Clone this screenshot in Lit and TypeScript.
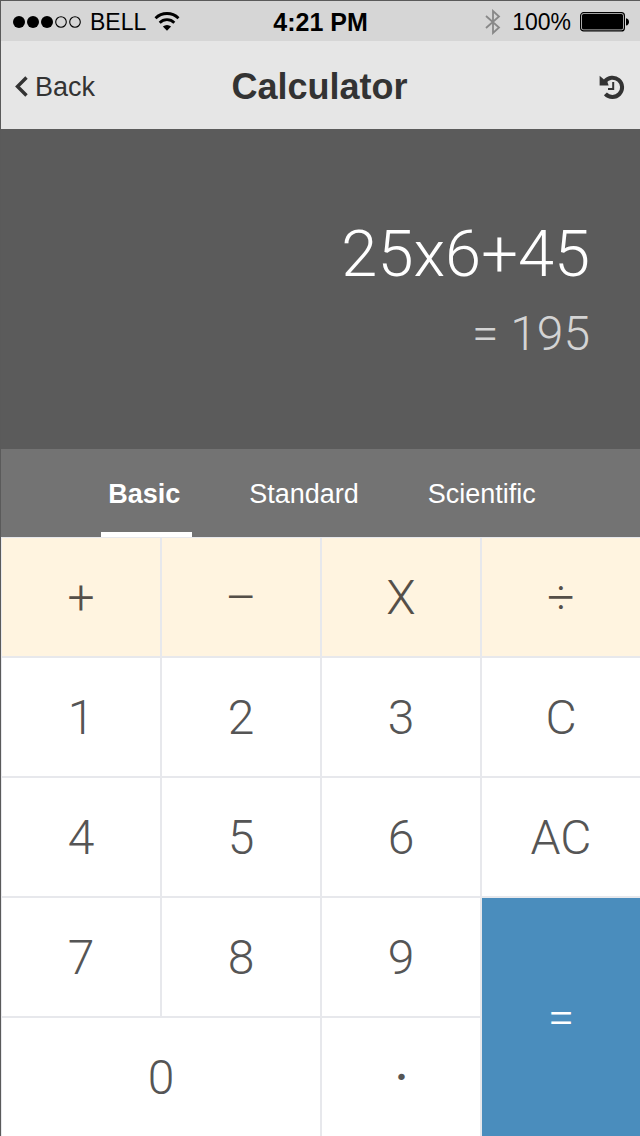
import { LitElement, html, css, svg } from "lit";
import { customElement, state } from "lit/decorators.js";
import { classMap } from "lit/directives/class-map.js";

type Key = { label: string; name: string; kind?: string };

const KEYS: Key[] = [
  { label: "+", name: "Plus", kind: "op" },
  { label: "–", name: "Minus", kind: "op" },
  { label: "X", name: "Times", kind: "op" },
  { label: "÷", name: "Divide", kind: "op" },
  { label: "1", name: "1" },
  { label: "2", name: "2" },
  { label: "3", name: "3" },
  { label: "C", name: "Clear last" },
  { label: "4", name: "4" },
  { label: "5", name: "5" },
  { label: "6", name: "6" },
  { label: "AC", name: "All clear" },
  { label: "7", name: "7" },
  { label: "8", name: "8" },
  { label: "9", name: "9" },
  { label: "=", name: "Equals", kind: "equals" },
  { label: "0", name: "0", kind: "zero" },
  { label: "·", name: "Decimal point", kind: "point" },
];

const MODES = ["Basic", "Standard", "Scientific"];

/** Evaluates + – x ÷ with the usual precedence. */
function evaluate(expr: string): string {
  const tokens = expr.match(/[\d.]+|[+–x÷]/g) ?? [];
  const terms: number[] = [];
  let op = "+";
  for (const t of tokens) {
    if (/[+–x÷]/.test(t)) {
      op = t;
      continue;
    }
    const n = Number(t);
    if (op === "+") terms.push(n);
    else if (op === "–") terms.push(-n);
    else if (op === "x") terms.push((terms.pop() ?? 0) * n);
    else terms.push((terms.pop() ?? 0) / n);
  }
  return String(terms.reduce((a, b) => a + b, 0));
}

@customElement("status-bar")
export class StatusBar extends LitElement {
  static styles = css`
    :host {
      display: grid;
      grid-template-columns: 1fr auto 1fr;
      align-items: center;
      height: 40px;
      padding: 2px 11px 0;
      box-sizing: border-box;
      background: #d6d6d6;
      color: #000;
      font: 23px/28px "Liberation Sans", Arial, sans-serif;
    }
    .side {
      display: flex;
      align-items: center;
      gap: 8px;
    }
    .right {
      justify-content: flex-end;
      gap: 9px;
    }
    .time {
      font-size: 25px;
      font-weight: 700;
    }
    svg {
      display: block;
    }
  `;
  render() {
    return html`
      <div class="side">
        <svg width="70" height="14" viewBox="0 0 70 14" aria-label="Signal 3 of 5">
          ${[0, 1, 2, 3, 4].map((i) =>
            i < 3
              ? svg`<circle cx=${7 + i * 14} cy="7" r="6"></circle>`
              : svg`<circle cx=${7 + i * 14} cy="7" r="5.3" fill="none" stroke="#000" stroke-width="1.1"></circle>`
          )}
        </svg>
        <span>BELL</span>
        <svg width="26" height="20" viewBox="0 0 26 20" aria-label="Wi-Fi">
          <path d="M13 18.800 8.900 14.600a5.900 5.900 0 0 1 8.200 0z" />
          <path
            d="M5.700 10.700a10.400 10.400 0 0 1 14.600 0M1.500 6.200a16.400 16.400 0 0 1 23 0"
            fill="none"
            stroke="#000"
            stroke-width="2.800"
          />
        </svg>
      </div>
      <span class="time">4:21 PM</span>
      <div class="side right">
        <svg width="18" height="26" viewBox="0 0 18 26" aria-label="Bluetooth">
          <path
            d="M1 7 14 18.500 8 24V2L14 7.500 1 19"
            fill="none"
            stroke="#888"
            stroke-width="1.8"
          />
        </svg>
        <span>100%</span>
        <svg width="49" height="20" viewBox="0 0 49 20" aria-label="Battery full">
          <rect x="0.600" y="0.700" width="43.800" height="18.200" rx="3" fill="none" stroke="#000" stroke-width="1.2" />
          <rect x="2" y="2" width="41" height="15.600" rx="1.500" />
          <path d="M46 6.200q3 .8 3 3.700t-3 3.700z" />
        </svg>
      </div>
    `;
  }
}

@customElement("app-root")
export class AppRoot extends LitElement {
  @state() private expression = "25x6+45";
  @state() private mode = "Basic";

  static styles = css`
    :host {
      display: flex;
      flex-direction: column;
      box-sizing: border-box;
      min-height: 100vh;
      border: solid #5a5a5a;
      border-width: 1px 0 0 1px;
      background: #fff;
      font-family: "Liberation Sans", Arial, sans-serif;
    }
    button {
      margin: 0;
      border: 0;
      background: none;
      font: inherit;
      color: inherit;
      cursor: pointer;
    }
    svg {
      display: block;
    }
    .header {
      display: grid;
      grid-template-columns: 1fr auto 1fr;
      align-items: center;
      box-sizing: border-box;
      height: 88px;
      padding: 4px 15px 0 13px;
      background: #e6e6e6;
      color: #333;
    }
    .back {
      display: flex;
      align-items: center;
      gap: 6px;
      color: inherit;
      font-size: 27px;
      line-height: 32px;
      text-decoration: none;
    }
    .title {
      margin: 0;
      font-size: 36px;
      line-height: 44px;
      font-weight: 700;
    }
    .history {
      justify-self: end;
      padding: 0;
    }
    .display {
      display: flex;
      flex-direction: column;
      justify-content: center;
      align-items: flex-end;
      box-sizing: border-box;
      height: 320px;
      padding: 2px 50px 0;
      background: #5b5b5b;
      font-family: Roboto, "Liberation Sans", sans-serif;
      font-weight: 300;
    }
    .expression {
      color: #fff;
      font-size: 65px;
      line-height: 88px;
    }
    .result {
      color: #d4d4d4;
      font-size: 48px;
      line-height: 72px;
    }
    .tabs {
      display: flex;
      justify-content: center;
      gap: 50px;
      height: 88px;
      padding-left: 8px;
      background: #737373;
      color: #fff;
    }
    .tab {
      box-sizing: border-box;
      padding: 2px 12px 0 7px;
      border: solid transparent;
      border-width: 5px 0;
      font-size: 27px;
      line-height: 32px;
    }
    .tab.active {
      border-bottom-color: #fff;
      font-weight: 700;
    }
    .keypad {
      display: grid;
      grid-template-columns: repeat(4, 1fr);
      grid-template-rows: repeat(5, minmax(64px, 1fr));
      gap: 2px;
      flex: 1;
      padding: 1px 0 0 1px;
      background: #e7e8ec;
    }
    .key {
      padding: 2px 0 0;
      background: #fff;
      color: #555;
      font-family: Roboto, "Liberation Sans", sans-serif;
      font-size: 48px;
      font-weight: 300;
      line-height: 56px;
    }
    .op {
      background: #fff4e0;
      color: #554f48;
    }
    .zero {
      grid-column: span 2;
    }
    .point {
      font-style: italic;
      font-weight: 500;
    }
    .equals {
      grid-row: span 2;
      background: #4a8dbd;
      color: #fff;
    }
  `;

  private press(label: string) {
    if (label === "AC") this.expression = "";
    else if (label === "C") this.expression = this.expression.slice(0, -1);
    else if (label === "=") this.expression = evaluate(this.expression);
    else this.expression += label === "X" ? "x" : label === "·" ? "." : label;
  }

  render() {
    return html`
      <status-bar></status-bar>
      <header class="header">
        <a class="back" href="#">
          <svg width="15" height="22" viewBox="0 0 15 22" aria-hidden="true">
            <path d="M12.500 1.500 3.500 10.500l9 9" fill="none" stroke="#333" stroke-width="3.400" />
          </svg>
          Back
        </a>
        <h1 class="title">Calculator</h1>
        <button class="history" aria-label="History">
          <svg width="26" height="26" viewBox="0 0 26 26" aria-hidden="true">
            <path
              d="M5.800 7.600A9.600 9.600 0 1 1 6.400 19.800"
              fill="none"
              stroke="#333"
              stroke-width="4"
            />
            <path d="M.600 1.800V11.400H9.600L8.600 8.400 5 5.400z" fill="#333" />
            <path d="M14.200 8v7H9" fill="none" stroke="#333" stroke-width="2" />
          </svg>
        </button>
      </header>
      <section class="display" aria-live="polite">
        <output class="expression">${this.expression}</output>
        <output class="result">= ${evaluate(this.expression)}</output>
      </section>
      <nav class="tabs" role="tablist">
        ${MODES.map(
          (m) => html`<button
            role="tab"
            aria-selected=${m === this.mode}
            class=${classMap({ tab: true, active: m === this.mode })}
            @click=${() => (this.mode = m)}
          >${m}</button>`
        )}
      </nav>
      <main class="keypad">
        ${KEYS.map(
          (k) => html`<button
            class="key ${k.kind ?? ""}"
            aria-label=${k.name}
            @click=${() => this.press(k.label)}
          >${k.label}</button>`
        )}
      </main>
    `;
  }
}
